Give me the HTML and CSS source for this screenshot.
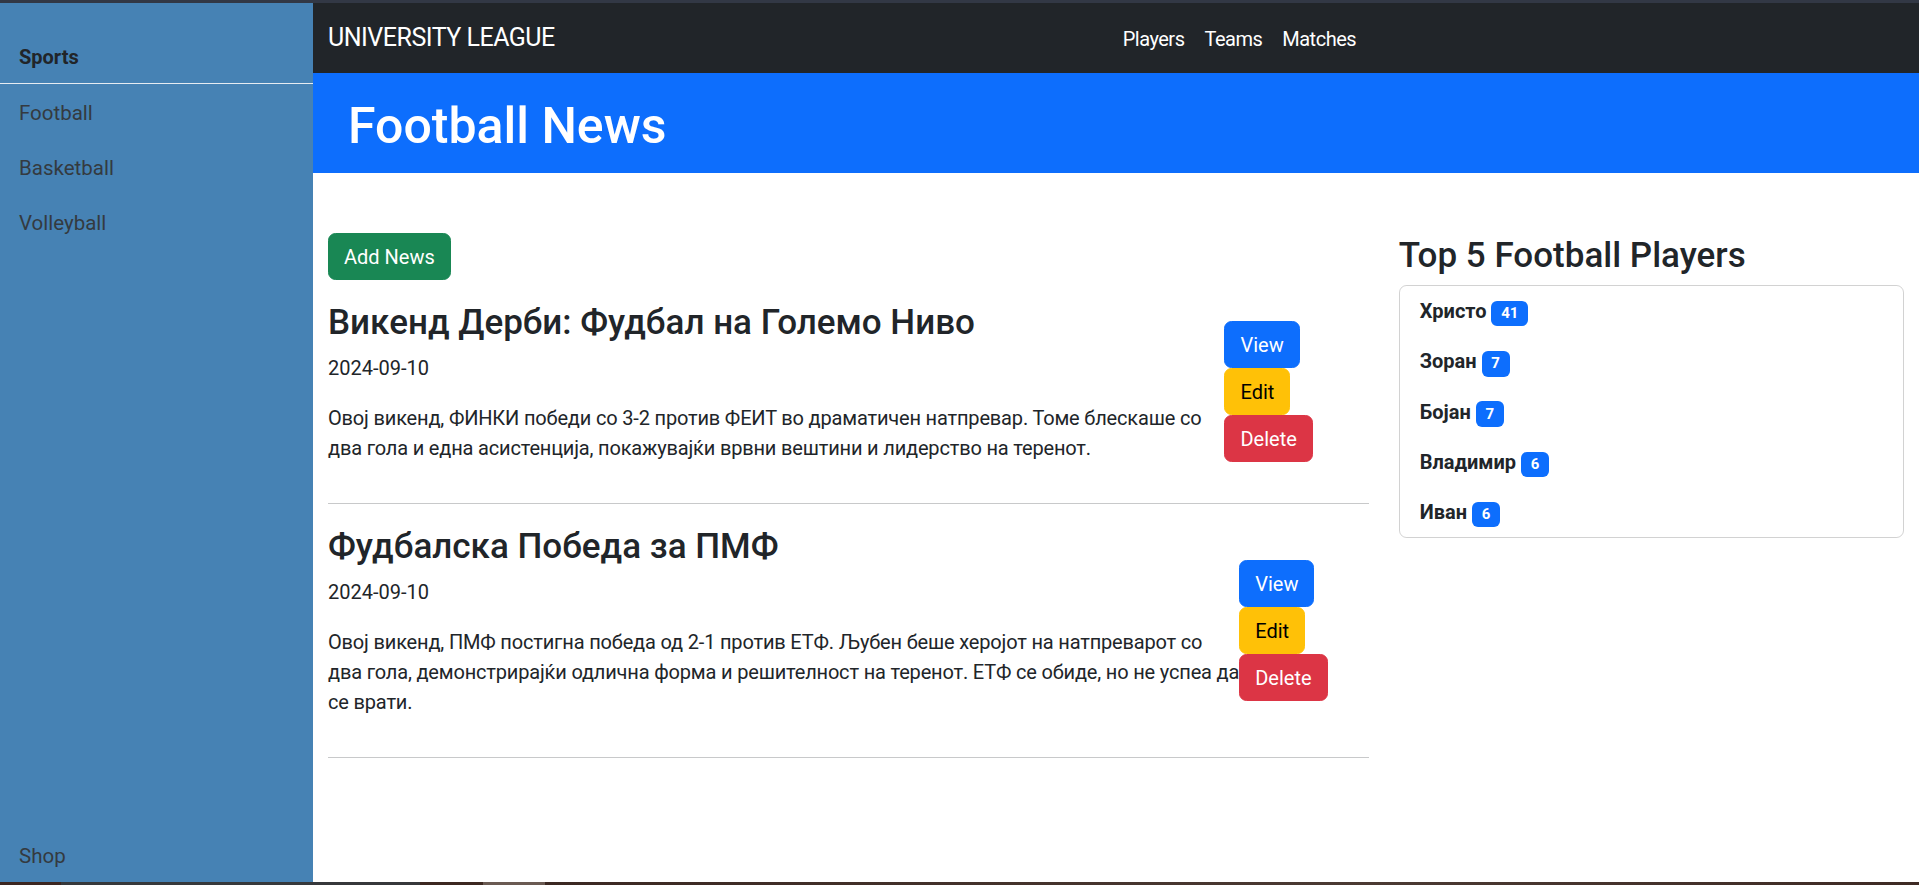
FILE: index.html
```html
<!DOCTYPE html>
<html lang="mk">
<head>
<meta charset="utf-8">
<title>University League - Football News</title>
<link rel="stylesheet" href="styles.css">
</head>
<body>
<div class="window-top"></div>
<div class="app">
  <aside class="sidebar">
    <div class="sidebar-title">Sports</div>
    <hr class="sidebar-rule">
    <nav class="sidebar-links">
      <a class="sidebar-link" href="#">Football</a>
      <a class="sidebar-link" href="#">Basketball</a>
      <a class="sidebar-link" href="#">Volleyball</a>
    </nav>
    <a class="sidebar-link sidebar-bottom" href="#">Shop</a>
  </aside>

  <div class="main">
    <header class="navbar">
      <a class="brand" href="#">UNIVERSITY LEAGUE</a>
      <ul class="nav">
        <li><a class="nav-link" href="#">Players</a></li>
        <li><a class="nav-link" href="#">Teams</a></li>
        <li><a class="nav-link" href="#">Matches</a></li>
      </ul>
    </header>

    <section class="jumbo">
      <h1 class="jumbo-title">Football News</h1>
    </section>

    <div class="content">
      <div class="row">
        <div class="col-main">
          <a class="btn btn-success btn-add" href="#">Add News</a>

          <article class="news">
            <div class="news-text">
              <h3 class="news-title">Викенд Дерби: Фудбал на Големо Ниво</h3>
              <p class="news-date">2024-09-10</p>
              <p class="news-body">Овој викенд, ФИНКИ победи со 3-2 против ФЕИТ во драматичен натпревар. Томе блескаше со два гола и една асистенција, покажувајќи врвни вештини и лидерство на теренот.</p>
            </div>
            <div class="news-actions">
              <a class="btn btn-primary" href="#">View</a>
              <a class="btn btn-warning" href="#">Edit</a>
              <a class="btn btn-danger" href="#">Delete</a>
            </div>
          </article>
          <hr class="news-rule">

          <article class="news">
            <div class="news-text">
              <h3 class="news-title">Фудбалска Победа за ПМФ</h3>
              <p class="news-date">2024-09-10</p>
              <p class="news-body">Овој викенд, ПМФ постигна победа од 2-1 против ЕТФ. Љубен беше херојот на натпреварот со два гола, демонстрирајќи одлична форма и решителност на теренот. ЕТФ се обиде, но не успеа да се врати.</p>
            </div>
            <div class="news-actions">
              <a class="btn btn-primary" href="#">View</a>
              <a class="btn btn-warning" href="#">Edit</a>
              <a class="btn btn-danger" href="#">Delete</a>
            </div>
          </article>
          <hr class="news-rule">
        </div>

        <div class="col-side">
          <h3 class="side-title">Top 5 Football Players</h3>
          <ul class="player-list">
            <li class="player"><span class="player-name">Христо</span> <span class="badge">41</span></li>
            <li class="player"><span class="player-name">Зоран</span> <span class="badge">7</span></li>
            <li class="player"><span class="player-name">Бојан</span> <span class="badge">7</span></li>
            <li class="player"><span class="player-name">Владимир</span> <span class="badge">6</span></li>
            <li class="player"><span class="player-name">Иван</span> <span class="badge">6</span></li>
          </ul>
        </div>
      </div>
    </div>
  </div>
</div>
<div class="taskbar">
  <span class="tb tb-a"></span>
  <span class="tb tb-b"></span>
  <span class="tb tb-c"></span>
  <span class="tb tb-d"></span>
  <span class="tb tb-e"></span>
</div>
</body>
</html>
```
FILE: styles.css
```css
* { box-sizing: border-box; }

html, body {
  margin: 0;
  padding: 0;
  height: 100%;
  overflow: hidden;
}

body {
  font-family: Roboto, "Noto Sans", "Liberation Sans", sans-serif;
  font-size: 20px;
  line-height: 30px;
  color: #212529;
  background: #fff;
  display: flex;
  flex-direction: column;
}

a { text-decoration: none; }

.window-top {
  height: 3px;
  flex: 0 0 3px;
  background: #323845;
}

.app {
  flex: 1 1 auto;
  display: flex;
  min-height: 0;
}

/* ---------- Sidebar ---------- */
.sidebar {
  width: 313px;
  flex: 0 0 313px;
  background: #4682b4;
  display: flex;
  flex-direction: column;
}

.sidebar-title {
  padding: 39px 19px 0;
  font-weight: 700;
  color: #212529;
}

.sidebar-rule {
  margin: 11px 0 0;
  border: 0;
  border-top: 1px solid #e6ecf2;
  height: 0;
}

.sidebar-links {
  display: flex;
  flex-direction: column;
  padding-top: 1.5px;
}

.sidebar-link {
  display: block;
  padding: 12.5px 19px;
  color: #343a40;
  font-size: 20.5px;
}

.sidebar-bottom {
  margin-top: auto;
  padding: 0 19px 11px;
}

/* ---------- Main ---------- */
.main {
  flex: 1 1 auto;
  min-width: 0;
  display: flex;
  flex-direction: column;
}

.navbar {
  background: #212529;
  height: 70px;
  padding: 10px 15px;
  display: flex;
  align-items: center;
}

.brand {
  color: #fff;
  font-size: 25px;
  line-height: 37.5px;
  padding: 6.25px 0;
  margin-right: 20px;
  letter-spacing: -0.5px;
}

.nav {
  flex: 1 1 auto;
  list-style: none;
  margin: 0;
  padding: 0;
  display: flex;
  justify-content: center;
}

.nav-link {
  display: block;
  padding: 11px 10px 9px;
  color: #fff;
  letter-spacing: -0.5px;
}

.jumbo {
  background: #0d6efd;
  height: 100px;
  padding: 23px 35px 17px;
}

.jumbo-title {
  margin: 0;
  color: #fff;
  font-size: 50px;
  line-height: 60px;
  font-weight: 500;
}

.content {
  padding: 60px 15px 0;
}

.row {
  display: flex;
  margin: 0 -15px;
}

.col-main {
  flex: 0 0 66.6667%;
  max-width: 66.6667%;
  padding: 0 15px;
}

.col-side {
  flex: 0 0 33.3333%;
  max-width: 33.3333%;
  padding: 0 15px;
}

/* ---------- Buttons ---------- */
.btn {
  display: inline-block;
  padding: 7.5px 15px;
  font-size: 20px;
  line-height: 30px;
  border: 1px solid transparent;
  border-radius: 7.5px;
  vertical-align: middle;
  color: #fff;
}

.btn-success { background: #198754; border-color: #198754; }
.btn-primary { background: #0d6efd; border-color: #0d6efd; }
.btn-warning { background: #ffc107; border-color: #ffc107; color: #000; }
.btn-danger  { background: #dc3545; border-color: #dc3545; }

.btn-add { margin-bottom: 20px; }

/* ---------- News ---------- */
.news {
  display: flex;
  align-items: center;
}

.news-text {
  flex: 0 1 auto;
  min-width: 0;
}

.news-actions {
  flex: 0 1 auto;
  padding-right: 13.4px;
}

.news-title {
  margin: 0 0 8px;
  padding-top: 2px;
  font-size: 35px;
  line-height: 42px;
  font-weight: 500;
}

.news-date {
  margin: 0 0 20px;
  padding-top: 1px;
}

.news-body {
  margin: 0 0 20px;
  letter-spacing: -0.17px;
}

.news-rule {
  margin: 20px 0;
  border: 0;
  border-top: 1px solid #c8c9ca;
  height: 0;
}

/* ---------- Side panel ---------- */
.side-title {
  margin: 0 0 8px;
  padding-top: 2px;
  font-size: 35px;
  line-height: 42px;
  font-weight: 500;
}

.player-list {
  list-style: none;
  margin: 0;
  padding: 0;
  border: 1px solid rgba(0, 0, 0, 0.175);
  border-radius: 7.5px;
}

.player {
  padding: 10px 20px;
  line-height: 30px;
}

.player-name { font-weight: 700; }

.badge {
  display: inline-block;
  padding: 5.25px 9.75px;
  font-size: 15px;
  line-height: 1;
  font-weight: 700;
  color: #fff;
  background: #0d6efd;
  border-radius: 6px;
  vertical-align: baseline;
}

/* ---------- OS strip at the bottom ---------- */
.taskbar {
  height: 3px;
  flex: 0 0 3px;
  display: flex;
}

.tb { display: block; height: 100%; }
.tb-a { width: 61px; background: #3c2620; }
.tb-b { width: 359px; background: #36383b; }
.tb-c { width: 63px; background: #3c2820; }
.tb-d { width: 62px; background: #6a5a52; }
.tb-e { flex: 1 1 auto; background: linear-gradient(90deg, #3b2822, #4b3a33 60%, #3e2a24); }
```
